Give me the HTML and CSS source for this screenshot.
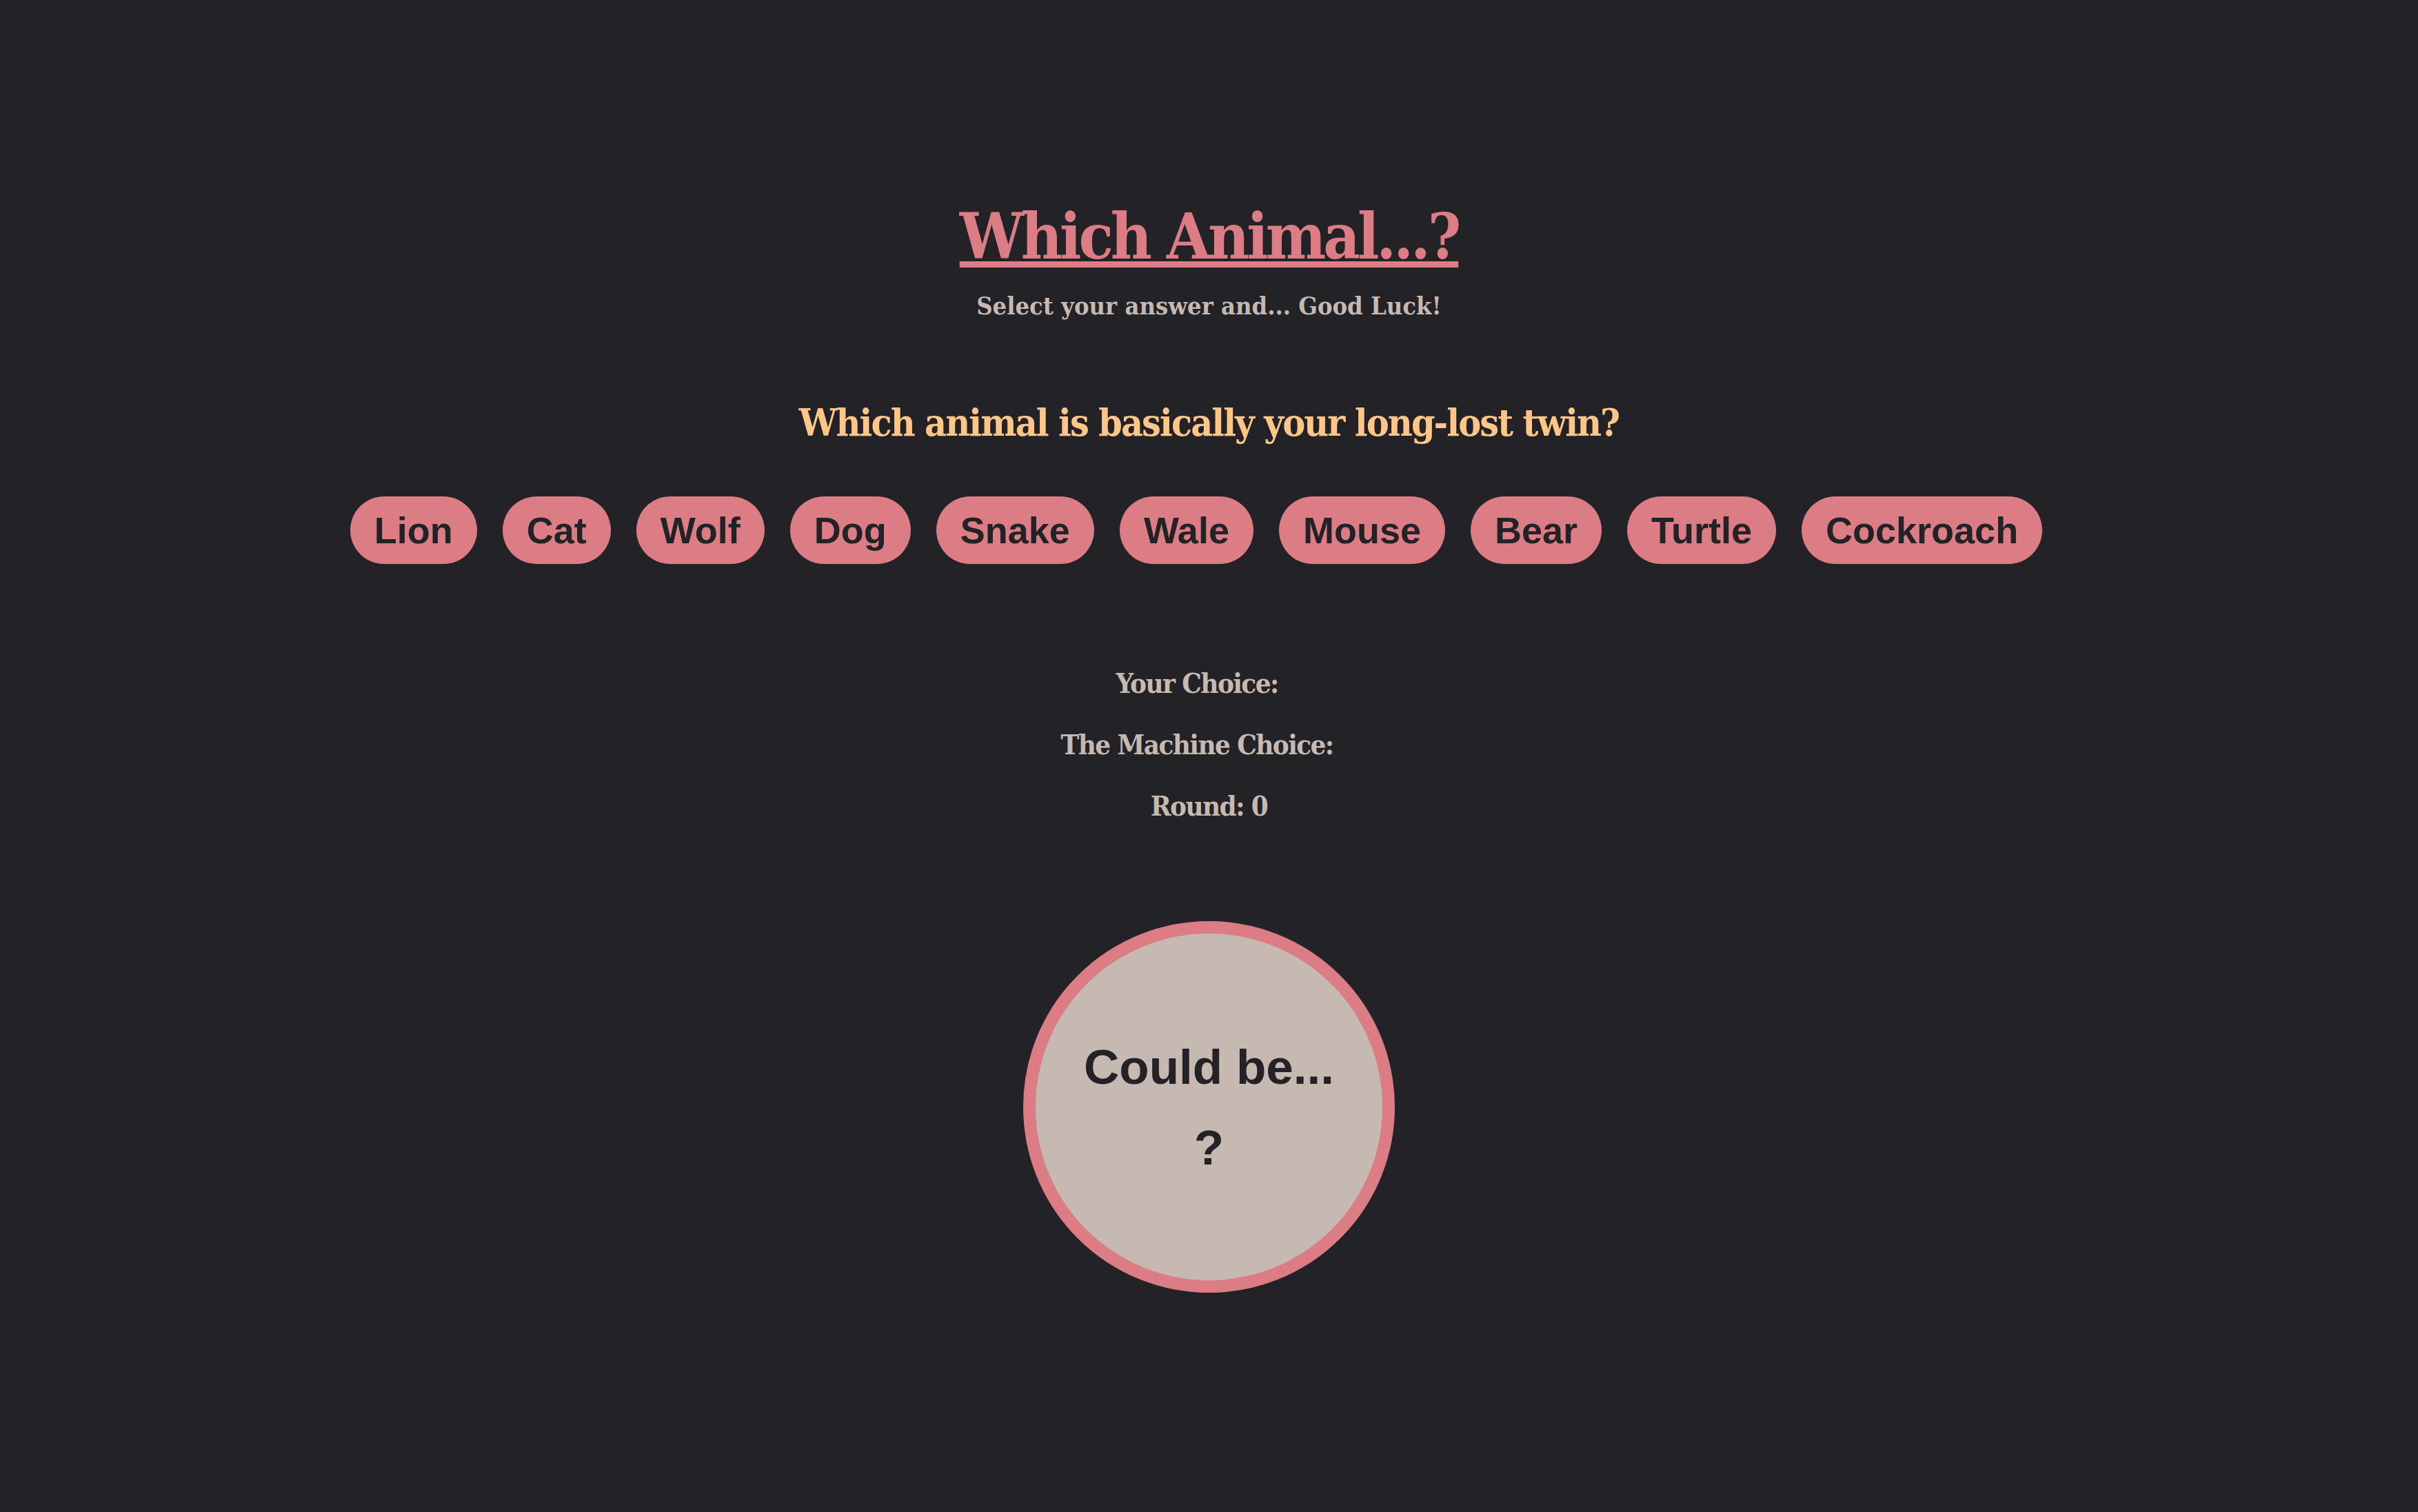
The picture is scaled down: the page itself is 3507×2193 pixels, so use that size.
FILE: index.html
```html
<!DOCTYPE html>
<html lang="en">
<head>
<meta charset="utf-8">
<title>Which Animal...?</title>
<link rel="stylesheet" href="styles.css">
</head>
<body>
<main class="page">
  <header class="header">
    <h1 class="title">Which Animal...?</h1>
    <p class="subtitle">Select your answer and... Good Luck!</p>
  </header>
  <h2 class="question">Which animal is basically your long-lost twin?</h2>
  <div class="choices">
    <button class="choice">Lion</button>
    <button class="choice">Cat</button>
    <button class="choice">Wolf</button>
    <button class="choice">Dog</button>
    <button class="choice">Snake</button>
    <button class="choice">Wale</button>
    <button class="choice">Mouse</button>
    <button class="choice">Bear</button>
    <button class="choice">Turtle</button>
    <button class="choice">Cockroach</button>
  </div>
  <section class="results">
    <p class="result">Your Choice: <span class="value"></span></p>
    <p class="result">The Machine Choice: <span class="value"></span></p>
    <p class="result">Round: 0</p>
  </section>
  <div class="circle">
    <div class="circle-line">Could be...</div>
    <div class="circle-line">?</div>
  </div>
</main>
</body>
</html>
```
FILE: styles.css
```css
html, body {
  margin: 0;
  padding: 0;
  background: #232227;
}
body {
  min-height: 2193px;
  font-family: "DejaVu Serif Condensed", "DejaVu Serif", serif;
  font-stretch: condensed;
}
.page {
  display: flex;
  flex-direction: column;
  align-items: center;
  padding-top: 293px;
}
.header {
  display: flex;
  flex-direction: column;
  align-items: center;
}
.title {
  margin: 0;
  font-size: 92px;
  line-height: 100px;
  font-weight: 700;
  letter-spacing: -4px;
  color: #dc7c84;
  text-decoration: underline;
  text-decoration-thickness: 9px;
  text-underline-offset: 4px;
}
.subtitle {
  margin: 30px 0 0;
  font-size: 36px;
  line-height: 40px;
  font-weight: 700;
  color: #c6b9b1;
}
.question {
  margin: 120px 0 0;
  font-size: 55px;
  line-height: 60px;
  font-weight: 700;
  letter-spacing: -1.9px;
  color: #ffc688;
}
.choices {
  display: flex;
  justify-content: center;
  margin-top: 77px;
}
.choice {
  margin: 0 37px 0 0;
  padding: 18px 35px;
  border: none;
  border-radius: 60px;
  background: #dc7c84;
  color: #232227;
  font-family: "Liberation Sans", Arial, sans-serif;
  font-size: 54px;
  line-height: 62px;
  font-weight: 700;
}
.results {
  margin-top: 128px;
  display: flex;
  flex-direction: column;
  align-items: center;
}
.result {
  margin: 0;
  font-size: 40px;
  line-height: 89px;
  font-weight: 700;
  letter-spacing: -1.6px;
  color: #c6b9b1;
}
.value {
  display: inline-block;
  width: 24px;
}
.circle {
  margin-top: 123px;
  width: 503px;
  height: 503px;
  border: 18px solid #dc7c84;
  border-radius: 50%;
  background: #c6b9b1;
  display: flex;
  flex-direction: column;
  align-items: center;
  justify-content: center;
  color: #232227;
  font-family: "Liberation Sans", Arial, sans-serif;
  font-weight: 700;
  font-size: 71px;
  line-height: 117px;
}
```
